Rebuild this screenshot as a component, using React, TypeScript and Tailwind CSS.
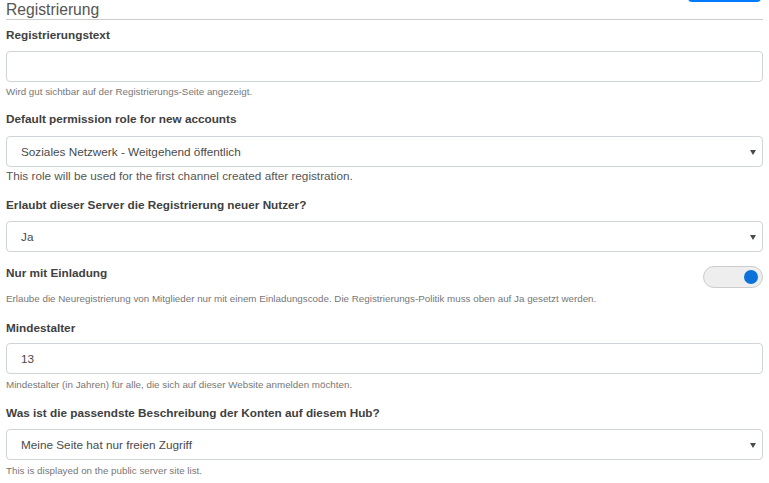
import React from "react";

const font = { fontFamily: '"Liberation Sans", Arial, sans-serif' };

function Label({ children, className = "" }: { children: React.ReactNode; className?: string }) {
  return (
    <div className={`text-[11.75px] font-bold leading-[14px] text-[#404040] ${className}`}>{children}</div>
  );
}

function Help({ children, className = "" }: { children: React.ReactNode; className?: string }) {
  return <div className={`text-[9.8px] leading-[12px] text-[#777] ${className}`}>{children}</div>;
}

function Field({ value, select }: { value?: string; select?: boolean }) {
  return (
    <div className="flex h-[31px] w-full items-center justify-between rounded-[4px] border border-[#ced4da] bg-white pl-[14px] pr-[5px] text-[11.75px] text-[#4a4a4a]">
      <span>{value}</span>
      {select && (
        <svg width="6" height="5" viewBox="0 0 6 5" className="mr-[1px] mt-[1px]">
          <path d="M0 0 H6 L3 5 Z" fill="#4a4a4a" />
        </svg>
      )}
    </div>
  );
}

export default function App() {
  return (
    <div style={font} className="relative h-[483px] w-[769px] overflow-hidden bg-white px-[6px]">
      <div className="absolute right-[8px] top-[-20px] h-[22px] w-[73px] rounded-[4px] bg-[#007bff]" />
      <div className="h-[20px] border-b border-[#ccc]">
        <div className="pt-[1px] text-[15.7px] leading-[17px] text-[#555]">Registrierung</div>
      </div>

      <Label className="mt-[8px]">Registrierungstext</Label>
      <div className="mt-[9px]">
        <Field />
      </div>
      <Help className="mt-[4px]">Wird gut sichtbar auf der Registrierungs-Seite angezeigt.</Help>

      <Label className="mt-[14px]">Default permission role for new accounts</Label>
      <div className="mt-[10px]">
        <Field value="Soziales Netzwerk - Weitgehend öffentlich" select />
      </div>
      <div className="mt-[2px] text-[11.75px] leading-[14px] text-[#555]">
        This role will be used for the first channel created after registration.
      </div>

      <Label className="mt-[15px]">Erlaubt dieser Server die Registrierung neuer Nutzer?</Label>
      <div className="mt-[9px]">
        <Field value="Ja" select />
      </div>

      <div className="mt-[14px] flex h-[22px] items-start justify-between">
        <Label>Nur mit Einladung</Label>
        <div className="flex h-[22px] w-[60px] items-center justify-end rounded-full border border-[#ccc] bg-[#eee] pr-[4px]">
          <div className="h-[14px] w-[14px] rounded-full bg-[#0a72d9]" />
        </div>
      </div>
      <Help className="mt-[5px]">
        Erlaube die Neuregistrierung von Mitglieder nur mit einem Einladungscode. Die Registrierungs-Politik muss oben auf Ja gesetzt werden.
      </Help>

      <Label className="mt-[16px]">Mindestalter</Label>
      <div className="mt-[8px]">
        <Field value="13" />
      </div>
      <Help className="mt-[5px]">Mindestalter (in Jahren) für alle, die sich auf dieser Website anmelden möchten.</Help>

      <Label className="mt-[15px]">Was ist die passendste Beschreibung der Konten auf diesem Hub?</Label>
      <div className="mt-[9px]">
        <Field value="Meine Seite hat nur freien Zugriff" select />
      </div>
      <Help className="mt-[5px]">This is displayed on the public server site list.</Help>
    </div>
  );
}
